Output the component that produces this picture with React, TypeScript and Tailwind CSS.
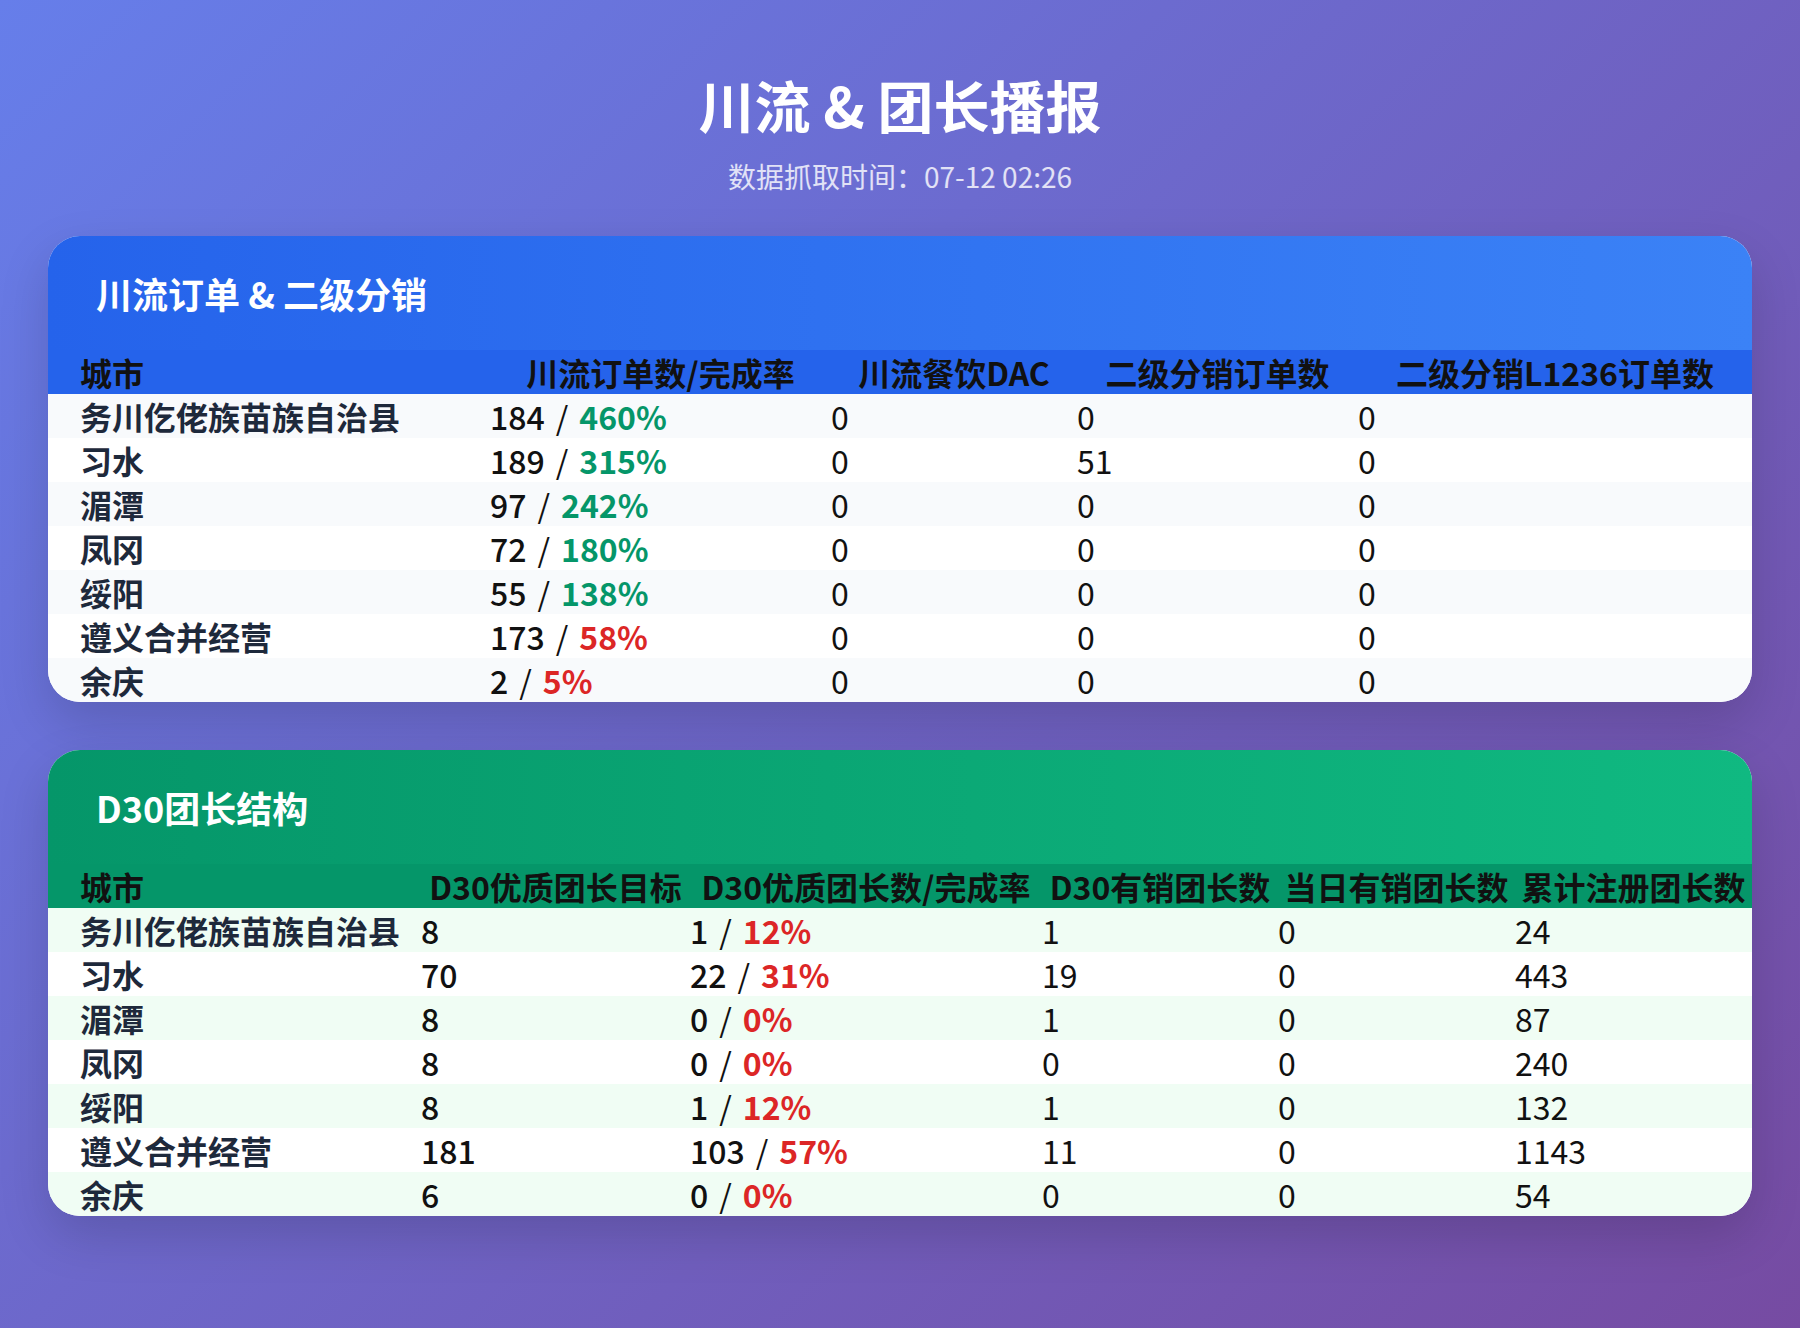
import React from "react";

type Pct = { value: string; good: boolean };

const ORDER_ROWS: { city: string; orders: string; pct: Pct; dac: string; sub: string; l1236: string }[] = [
  { city: "务川仡佬族苗族自治县", orders: "184", pct: { value: "460%", good: true }, dac: "0", sub: "0", l1236: "0" },
  { city: "习水", orders: "189", pct: { value: "315%", good: true }, dac: "0", sub: "51", l1236: "0" },
  { city: "湄潭", orders: "97", pct: { value: "242%", good: true }, dac: "0", sub: "0", l1236: "0" },
  { city: "凤冈", orders: "72", pct: { value: "180%", good: true }, dac: "0", sub: "0", l1236: "0" },
  { city: "绥阳", orders: "55", pct: { value: "138%", good: true }, dac: "0", sub: "0", l1236: "0" },
  { city: "遵义合并经营", orders: "173", pct: { value: "58%", good: false }, dac: "0", sub: "0", l1236: "0" },
  { city: "余庆", orders: "2", pct: { value: "5%", good: false }, dac: "0", sub: "0", l1236: "0" },
];

const LEADER_ROWS: { city: string; target: string; count: string; pct: Pct; sold: string; today: string; total: string }[] = [
  { city: "务川仡佬族苗族自治县", target: "8", count: "1", pct: { value: "12%", good: false }, sold: "1", today: "0", total: "24" },
  { city: "习水", target: "70", count: "22", pct: { value: "31%", good: false }, sold: "19", today: "0", total: "443" },
  { city: "湄潭", target: "8", count: "0", pct: { value: "0%", good: false }, sold: "1", today: "0", total: "87" },
  { city: "凤冈", target: "8", count: "0", pct: { value: "0%", good: false }, sold: "0", today: "0", total: "240" },
  { city: "绥阳", target: "8", count: "1", pct: { value: "12%", good: false }, sold: "1", today: "0", total: "132" },
  { city: "遵义合并经营", target: "181", count: "103", pct: { value: "57%", good: false }, sold: "11", today: "0", total: "1143" },
  { city: "余庆", target: "6", count: "0", pct: { value: "0%", good: false }, sold: "0", today: "0", total: "54" },
];

function Ratio({ count, pct }: { count: string; pct: Pct }) {
  return (
    <span className="whitespace-nowrap">
      <span className="font-medium text-[#111]">{count}</span>
      <span className="px-[11px] text-[#111]">/</span>
      <span className={`font-semibold ${pct.good ? "text-[#059669]" : "text-[#dc2626]"}`}>
        {pct.value}
      </span>
    </span>
  );
}

function City({ name }: { name: string }) {
  return <span className="whitespace-nowrap font-semibold text-[#1e293b]">{name}</span>;
}

export default function App() {
  return (
    <div
      className="min-h-screen bg-[linear-gradient(135deg,#667eea_0%,#764ba2_100%)] px-12 pt-[70px] pb-28"
      style={{ fontFamily: '"Noto Sans CJK SC", "Noto Sans", sans-serif' }}
    >
      {/* Title */}
      <h1 className="text-center text-[56px] font-bold leading-[68px] text-white">
        川流 &amp; 团长播报
      </h1>
      <p className="mt-[18px] text-center text-[28px] leading-[40px] text-white/80">
        数据抓取时间：07-12 02:26
      </p>

      {/* Orders card */}
      <section className="mt-10 overflow-hidden rounded-[32px] bg-white shadow-[0_20px_50px_rgba(0,0,0,0.15)]">
        <div className="flex h-[114px] items-center bg-[linear-gradient(90deg,#2563eb,#3b82f6)] pl-12">
          <h2 className="text-[36px] font-bold leading-[48px] text-white">川流订单 &amp; 二级分销</h2>
        </div>
        <div className="grid h-[44px] grid-cols-[410px_341px_246px_281px_1fr] bg-[#2563eb] pl-8 text-[32px] font-bold leading-[44px] text-[#111]">
          <div>城市</div>
          <div className="text-center">川流订单数/完成率</div>
          <div className="text-center">川流餐饮DAC</div>
          <div className="text-center">二级分销订单数</div>
          <div className="text-center">二级分销L1236订单数</div>
        </div>
        {ORDER_ROWS.map((r, i) => (
          <div
            key={r.city}
            className={`grid h-[44px] grid-cols-[410px_341px_246px_281px_1fr] pl-8 text-[32px] leading-[44px] text-[#111] ${
              i % 2 === 0 ? "bg-[#f8fafc]" : "bg-white"
            }`}
          >
            <City name={r.city} />
            <Ratio count={r.orders} pct={r.pct} />
            <div>{r.dac}</div>
            <div>{r.sub}</div>
            <div>{r.l1236}</div>
          </div>
        ))}
      </section>

      {/* Leaders card */}
      <section className="mt-12 overflow-hidden rounded-[32px] bg-white shadow-[0_20px_50px_rgba(0,0,0,0.15)]">
        <div className="flex h-[114px] items-center bg-[linear-gradient(90deg,#059669,#10b981)] pl-12">
          <h2 className="text-[36px] font-bold leading-[48px] text-white">D30团长结构</h2>
        </div>
        <div className="grid h-[44px] grid-cols-[341px_269px_352px_236px_237px_1fr] bg-[#059669] pl-8 text-[32px] font-bold leading-[44px] text-[#111]">
          <div>城市</div>
          <div className="whitespace-nowrap text-center">D30优质团长目标</div>
          <div className="whitespace-nowrap text-center">D30优质团长数/完成率</div>
          <div className="whitespace-nowrap text-center">D30有销团长数</div>
          <div className="whitespace-nowrap text-center">当日有销团长数</div>
          <div className="whitespace-nowrap text-center">累计注册团长数</div>
        </div>
        {LEADER_ROWS.map((r, i) => (
          <div
            key={r.city}
            className={`grid h-[44px] grid-cols-[341px_269px_352px_236px_237px_1fr] pl-8 text-[32px] leading-[44px] text-[#111] ${
              i % 2 === 0 ? "bg-[#f0fdf4]" : "bg-white"
            }`}
          >
            <City name={r.city} />
            <div className="font-medium">{r.target}</div>
            <Ratio count={r.count} pct={r.pct} />
            <div>{r.sold}</div>
            <div>{r.today}</div>
            <div>{r.total}</div>
          </div>
        ))}
      </section>
    </div>
  );
}
